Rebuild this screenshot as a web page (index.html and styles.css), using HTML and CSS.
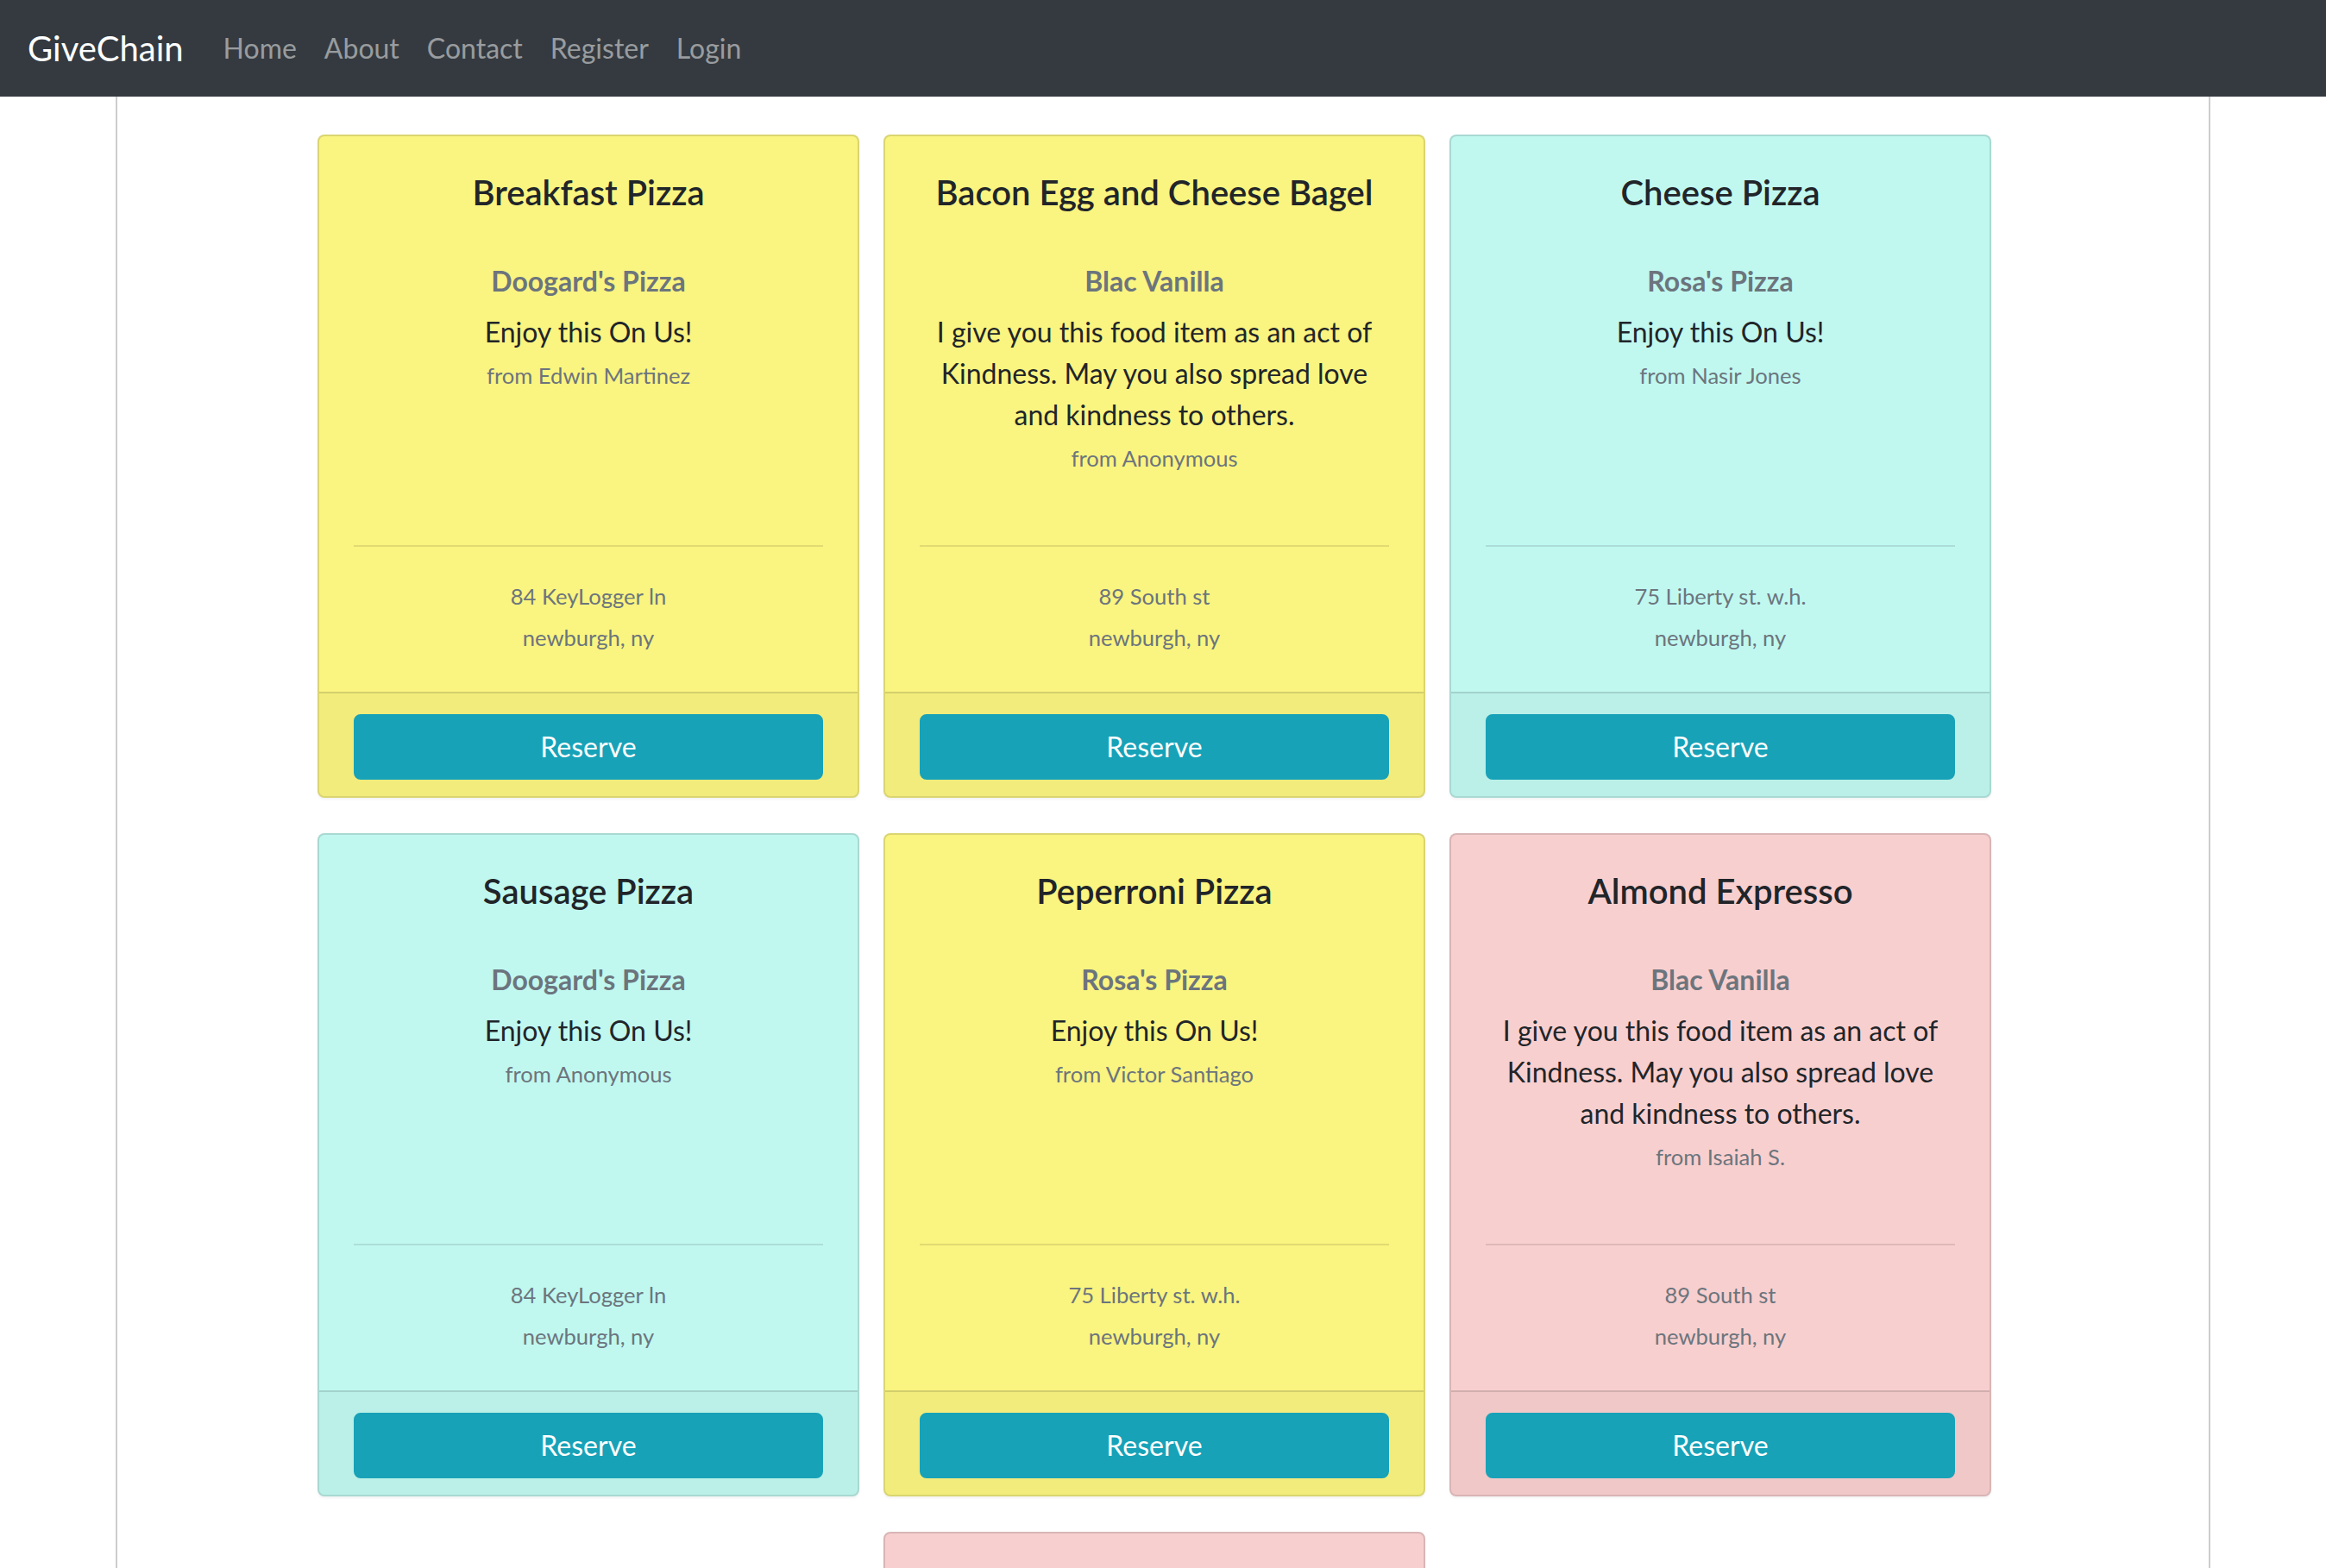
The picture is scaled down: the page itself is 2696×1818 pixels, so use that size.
FILE: index.html
```html
<!DOCTYPE html>
<html lang="en">
<head>
<meta charset="utf-8">
<title>GiveChain</title>
<link rel="stylesheet" href="styles.css">
</head>
<body>
<nav class="navbar">
  <a class="brand" href="#">GiveChain</a>
  <ul class="nav">
    <li><a href="#">Home</a></li>
    <li><a href="#">About</a></li>
    <li><a href="#">Contact</a></li>
    <li><a href="#">Register</a></li>
    <li><a href="#">Login</a></li>
  </ul>
</nav>
<main class="container">
  <div class="cards">
    <article class="card card-yellow">
      <div class="card-body">
        <div class="card-top">
          <h5 class="card-title">Breakfast Pizza</h5>
          <h6 class="card-subtitle">Doogard's Pizza</h6>
          <p class="card-text">Enjoy this On Us!<br><small class="muted">from Edwin Martinez</small></p>
        </div>
        <hr>
        <p class="address"><small>84 KeyLogger ln</small><br><small>newburgh, ny</small></p>
      </div>
      <div class="card-footer"><button class="btn">Reserve</button></div>
    </article>
    <article class="card card-yellow">
      <div class="card-body">
        <div class="card-top">
          <h5 class="card-title">Bacon Egg and Cheese Bagel</h5>
          <h6 class="card-subtitle">Blac Vanilla</h6>
          <p class="card-text">I give you this food item as an act of Kindness. May you also spread love and kindness to others.<br><small class="muted">from Anonymous</small></p>
        </div>
        <hr>
        <p class="address"><small>89 South st</small><br><small>newburgh, ny</small></p>
      </div>
      <div class="card-footer"><button class="btn">Reserve</button></div>
    </article>
    <article class="card card-cyan">
      <div class="card-body">
        <div class="card-top">
          <h5 class="card-title">Cheese Pizza</h5>
          <h6 class="card-subtitle">Rosa's Pizza</h6>
          <p class="card-text">Enjoy this On Us!<br><small class="muted">from Nasir Jones</small></p>
        </div>
        <hr>
        <p class="address"><small>75 Liberty st. w.h.</small><br><small>newburgh, ny</small></p>
      </div>
      <div class="card-footer"><button class="btn">Reserve</button></div>
    </article>
    <article class="card card-cyan">
      <div class="card-body">
        <div class="card-top">
          <h5 class="card-title">Sausage Pizza</h5>
          <h6 class="card-subtitle">Doogard's Pizza</h6>
          <p class="card-text">Enjoy this On Us!<br><small class="muted">from Anonymous</small></p>
        </div>
        <hr>
        <p class="address"><small>84 KeyLogger ln</small><br><small>newburgh, ny</small></p>
      </div>
      <div class="card-footer"><button class="btn">Reserve</button></div>
    </article>
    <article class="card card-yellow">
      <div class="card-body">
        <div class="card-top">
          <h5 class="card-title">Peperroni Pizza</h5>
          <h6 class="card-subtitle">Rosa's Pizza</h6>
          <p class="card-text">Enjoy this On Us!<br><small class="muted">from Victor Santiago</small></p>
        </div>
        <hr>
        <p class="address"><small>75 Liberty st. w.h.</small><br><small>newburgh, ny</small></p>
      </div>
      <div class="card-footer"><button class="btn">Reserve</button></div>
    </article>
    <article class="card card-pink">
      <div class="card-body">
        <div class="card-top">
          <h5 class="card-title">Almond Expresso</h5>
          <h6 class="card-subtitle">Blac Vanilla</h6>
          <p class="card-text">I give you this food item as an act of Kindness. May you also spread love and kindness to others.<br><small class="muted">from Isaiah S.</small></p>
        </div>
        <hr>
        <p class="address"><small>89 South st</small><br><small>newburgh, ny</small></p>
      </div>
      <div class="card-footer"><button class="btn">Reserve</button></div>
    </article>
    <article class="card card-pink">
      <div class="card-body">
        <div class="card-top">
          <h5 class="card-title">Vanilla Latte</h5>
          <h6 class="card-subtitle">Blac Vanilla</h6>
          <p class="card-text">Enjoy this On Us!<br><small class="muted">from Anonymous</small></p>
        </div>
        <hr>
        <p class="address"><small>89 South st</small><br><small>newburgh, ny</small></p>
      </div>
      <div class="card-footer"><button class="btn">Reserve</button></div>
    </article>
  </div>
</main>
</body>
</html>
```
FILE: styles.css
```css
* {
  box-sizing: border-box;
}

body {
  margin: 0;
  font-family: Lato, "Open Sans", sans-serif;
  font-size: 32px;
  line-height: 48px;
  color: #212529;
  background: #fff;
}

.navbar {
  display: flex;
  align-items: center;
  height: 112px;
  padding: 0 32px;
  background: #343a40;
}

.brand {
  font-size: 40px;
  line-height: 60px;
  color: #fff;
  text-decoration: none;
  margin-right: 30px;
}

.nav {
  display: flex;
  list-style: none;
  margin: 0;
  padding: 0;
}

.nav a {
  display: block;
  padding: 16px;
  font-size: 32px;
  line-height: 48px;
  color: rgba(255, 255, 255, 0.5);
  text-decoration: none;
}

.container {
  margin-left: 134px;
  width: 2428px;
  min-height: calc(100vh - 112px);
  border-left: 2px solid #cccccc;
  border-right: 2px solid #cccccc;
  padding: 44px 20px 60px 0;
}

.cards {
  display: flex;
  flex-wrap: wrap;
  justify-content: center;
  gap: 41px 28px;
}

.card {
  width: 628px;
  height: 769px;
  display: flex;
  flex-direction: column;
  border: 2px solid rgba(0, 0, 0, 0.125);
  border-radius: 8px;
  box-shadow: 0 2px 3px rgba(0, 0, 0, 0.05);
  text-align: center;
  overflow: hidden;
}

.card-yellow {
  background: #faf480;
}

.card-cyan {
  background: #c0f8f0;
}

.card-pink {
  background: #f8cfcf;
}

.card-body {
  flex: 1 1 auto;
  min-height: 0;
  padding: 41px 40px 41px;
}

.card-top {
  height: 401px;
}

.card-title {
  margin: 0;
  font-size: 40px;
  line-height: 48px;
  font-weight: 600;
}

.card-subtitle {
  margin: 60px 0 0;
  font-size: 32px;
  line-height: 38.4px;
  font-weight: 700;
  color: #6c757d;
}

.card-text {
  margin: 16px 0 0;
}

small {
  font-size: 25.6px;
  line-height: 1;
}

.muted {
  color: #6c757d;
}

hr {
  height: 0;
  margin: 32px 0 31px;
  border: 0;
  border-top: 2px solid rgba(0, 0, 0, 0.1);
}

.address {
  margin: 0;
  color: #6c757d;
}

.card-footer {
  flex: 0 0 auto;
  padding: 24px 40px 19px;
  background: rgba(0, 0, 0, 0.03);
  border-top: 2px solid rgba(0, 0, 0, 0.125);
}

.btn {
  display: block;
  width: 100%;
  height: 76px;
  padding: 0 24px;
  border: 2px solid #17a2b8;
  border-radius: 8px;
  background: #17a2b8;
  color: #fff;
  font-family: inherit;
  font-size: 32px;
  line-height: 48px;
  cursor: pointer;
}
```
